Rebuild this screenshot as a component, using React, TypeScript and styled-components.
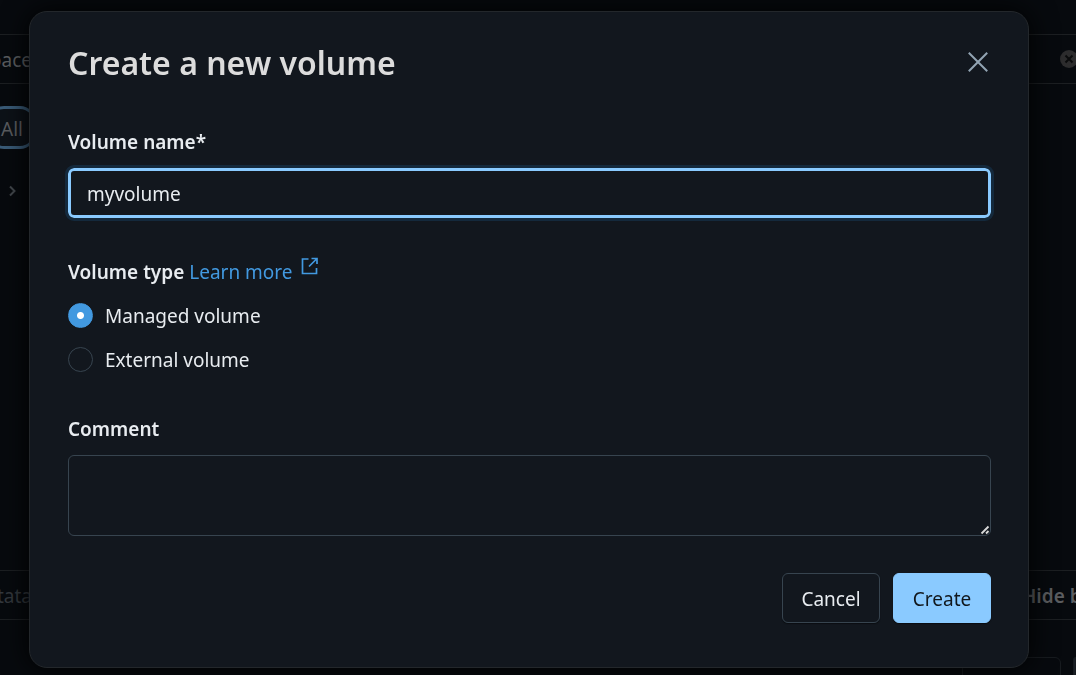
import React, { useId, useState } from "react";
import styled, { createGlobalStyle, css } from "styled-components";

const GlobalStyle = createGlobalStyle`
  *, *::before, *::after { box-sizing: border-box; }
  body {
    margin: 0;
    background: #070a0e;
    color: #e8ecf0;
    font: 400 19px/28px "Noto Sans", "Open Sans", sans-serif;
    overflow: hidden;
  }
  button, input, textarea { font: inherit; color: inherit; }
`;

const Page = styled.div`
  display: flex;
  flex-direction: column;
  height: 100vh;
  padding-top: 34px;
  color: #5b5d60;
  overflow: hidden;
`;

const Bar = styled.div`
  display: flex;
  align-items: center;
  justify-content: space-between;
  flex: none;
  height: 50px;
  border: solid #1c1f22;
  border-width: 1px 0;
`;

const Workspace = styled.main`
  flex: 1;
  padding-top: 22px;
`;

const EdgeLabel = styled.span<{ $dim?: boolean }>`
  display: flex;
  justify-content: flex-end;
  width: 32px;
  padding-top: 2px;
  white-space: nowrap;
  color: ${(p) => (p.$dim ? "#33383d" : "#5b5d60")};
`;

const RightLabel = styled.span`
  flex: none;
  width: 54px;
  padding-top: 2px;
  white-space: nowrap;
  font-weight: 600;
`;

const ClearButton = styled.button`
  display: grid;
  place-items: center;
  width: 18px;
  height: 18px;
  margin-right: -2px;
  padding: 0;
  border: 0;
  border-radius: 50%;
  background: #2c2c2d;
  color: #0a0b0c;
`;

const Pill = styled.button`
  display: block;
  height: 43px;
  width: 48px;
  margin-left: -12px;
  padding: 2px 0 0;
  border: 3px solid #3a5c79;
  border-radius: 16px;
  background: #0d1218;
`;

const Expander = styled.div`
  display: flex;
  padding: 34px 0 0 4px;
  color: #42474c;
`;

const Footer = styled.footer`
  display: flex;
  justify-content: flex-end;
  gap: 12px;
  flex: none;
  height: 55px;
  padding-top: 37px;
  overflow: hidden;
`;

const FooterBox = styled.div<{ $filled?: boolean }>`
  flex: none;
  width: ${(p) => (p.$filled ? "3px" : "99px")};
  height: 50px;
  border: 1px solid #171b1f;
  border-radius: ${(p) => (p.$filled ? "6px 0 0 6px" : "6px")};
  background: ${(p) => (p.$filled ? "#1b2027" : "transparent")};
`;

const Overlay = styled.div`
  position: fixed;
  inset: 0;
  padding: 11px 47px 7px 29px;
`;

const Dialog = styled.form`
  display: flex;
  flex-direction: column;
  padding: 31px 37px 44px 38px;
  border: 1px solid #23272b;
  border-radius: 18px;
  background: #12171e;
  box-shadow: 0 0 28px #000000;
`;

const Header = styled.header`
  display: flex;
  align-items: center;
  justify-content: space-between;
  height: 38px;
`;

const Title = styled.h2`
  margin: 0;
  padding-top: 2px;
  color: #dcdcdc;
  font-size: 32px;
  line-height: 38px;
  font-weight: 600;
`;

const CloseButton = styled.button`
  display: grid;
  place-items: center;
  width: 26px;
  height: 26px;
  padding: 0;
  border: 0;
  background: none;
  color: #92a4b3;
`;

const labelText = css`
  font-weight: 600;
  font-size: 19px;
  line-height: 28px;
  color: #e8ecf0;
`;

const Field = styled.div`
  display: flex;
  flex-direction: column;
  gap: 12px;
`;

const Label = styled.label`
  ${labelText}
`;

const NameField = styled(Field)`
  margin-top: 47px;
`;

const CommentField = styled(Field)`
  margin-top: 41px;
`;

const TextInput = styled.input`
  width: 100%;
  height: 50px;
  padding: 2px 16px 0;
  border: 3px solid #8acaff;
  border-radius: 6px;
  outline: 3px solid #14293c;
  background: #12171e;
`;

const TextArea = styled.textarea`
  display: block;
  width: 100%;
  height: 81px;
  padding: 8px 16px;
  border: 1px solid #37444f;
  border-radius: 6px;
  background: transparent;
  outline: 0;
  resize: none;
`;

const AreaWrap = styled.div`
  position: relative;
`;

const Grip = styled.svg`
  position: absolute;
  right: 1px;
  bottom: 1px;
  pointer-events: none;
`;

const TypeField = styled.fieldset`
  display: flex;
  flex-direction: column;
  gap: 16px;
  min-width: 0;
  margin: 39px 0 0;
  padding: 0;
  border: 0;
`;

const Legend = styled.legend`
  ${labelText}
  padding: 0;
  margin-bottom: 16px;
`;

const LearnMore = styled.a`
  color: #4299e0;
  font-weight: 400;
  text-decoration: none;
  svg { margin: 0 0 4px 8px; }
`;

const Option = styled.label`
  display: flex;
  align-items: flex-start;
  gap: 12px;
`;

const Radio = styled.input`
  appearance: none;
  width: 25px;
  height: 25px;
  margin: 1px 0 0;
  border: 1px solid #37444f;
  border-radius: 50%;
  &:checked {
    border-color: #4299e0;
    background: radial-gradient(circle, #ffffff 3px, #4299e0 4px);
  }
`;

const Actions = styled.div`
  display: flex;
  justify-content: flex-end;
  gap: 13px;
  margin-top: 37px;
`;

const Button = styled.button<{ $primary?: boolean }>`
  width: 98px;
  height: 50px;
  padding: 2px 0 0;
  border: 1px solid ${(p) => (p.$primary ? "#8acaff" : "#37444f")};
  border-radius: 6px;
  background: ${(p) => (p.$primary ? "#8acaff" : "transparent")};
  color: ${(p) => (p.$primary ? "#11171c" : "#e8ecf0")};
  box-shadow: 0 1px 1px #0a0d11;
`;

const volumeTypes = ["Managed volume", "External volume"];

export default function App() {
  const id = useId();
  const [name, setName] = useState("myvolume");
  const [type, setType] = useState(volumeTypes[0]);

  return (
    <>
      <GlobalStyle />
      <Page>
        <Bar>
          <EdgeLabel>space</EdgeLabel>
          <ClearButton type="button" aria-label="Clear">
            <svg width="10" height="10" viewBox="0 0 10 10" stroke="currentColor" strokeWidth="2">
              <path d="M1.5 1.5l7 7M8.5 1.5l-7 7" />
            </svg>
          </ClearButton>
        </Bar>
        <Workspace>
          <Pill type="button">All</Pill>
          <Expander>
            <svg width="16" height="16" viewBox="0 0 16 16" fill="none" stroke="currentColor" strokeWidth="2">
              <path d="M6 3.5l4.5 4.5L6 12.5" />
            </svg>
          </Expander>
        </Workspace>
        <Bar>
          <EdgeLabel $dim>tata</EdgeLabel>
          <RightLabel>Hide b</RightLabel>
        </Bar>
        <Footer>
          <FooterBox />
          <FooterBox $filled />
        </Footer>
      </Page>
      <Overlay>
        <Dialog role="dialog" aria-labelledby={`${id}-title`} onSubmit={(e) => e.preventDefault()}>
          <Header>
            <Title id={`${id}-title`}>Create a new volume</Title>
            <CloseButton type="button" aria-label="Close">
              <svg width="20" height="20" viewBox="0 0 20 20" stroke="currentColor" strokeWidth="2">
                <path d="M1.5 1.5l17 17M18.5 1.5l-17 17" strokeLinecap="square" />
              </svg>
            </CloseButton>
          </Header>
          <NameField>
            <Label htmlFor={`${id}-name`}>Volume name*</Label>
            <TextInput id={`${id}-name`} value={name} onChange={(e) => setName(e.target.value)} />
          </NameField>
          <TypeField>
            <Legend>
              Volume type{" "}
              <LearnMore href="#volume-types">
                Learn more
                <svg width="18" height="18" viewBox="0 0 18 18" fill="none" stroke="currentColor" strokeWidth="1.7">
                  <path d="M7.5 2H1.5v14.5H15.5V11M10.5 1.5H16V7M16 1.5L8 9.5" />
                </svg>
              </LearnMore>
            </Legend>
            {volumeTypes.map((t) => (
              <Option key={t}>
                <Radio type="radio" name={`${id}-type`} checked={type === t} onChange={() => setType(t)} />
                {t}
              </Option>
            ))}
          </TypeField>
          <CommentField>
            <Label htmlFor={`${id}-comment`}>Comment</Label>
            <AreaWrap>
              <TextArea id={`${id}-comment`} />
              <Grip width="10" height="10" viewBox="0 0 10 10" stroke="#d8d8d8" strokeWidth="1.8">
                <path d="M1.5 8.5l7-7M6 8.5l2.5-2.5" />
              </Grip>
            </AreaWrap>
          </CommentField>
          <Actions>
            <Button type="button">Cancel</Button>
            <Button type="submit" $primary>Create</Button>
          </Actions>
        </Dialog>
      </Overlay>
    </>
  );
}
